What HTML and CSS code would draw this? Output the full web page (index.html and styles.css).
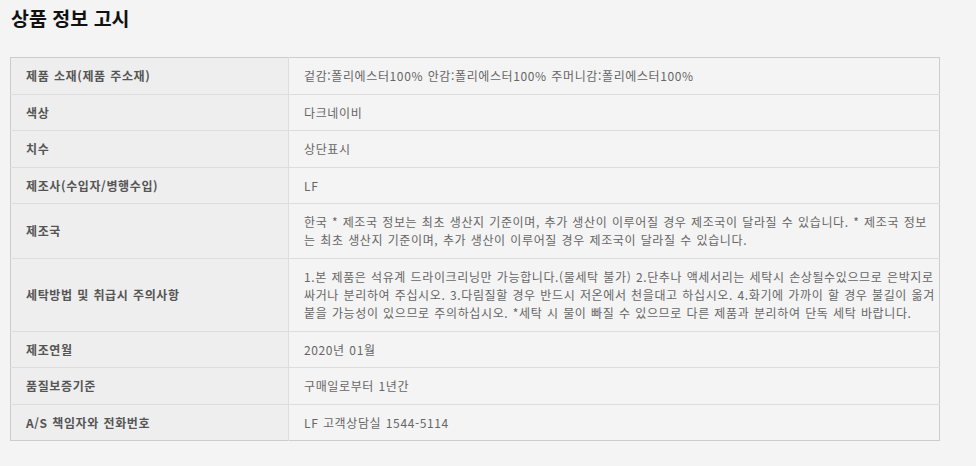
FILE: index.html
```html
<!DOCTYPE html>
<html lang="ko">
  <head>
    <meta charset="utf-8">
    <link rel="stylesheet" href="styles.css">
  </head>
  <body>
    <h2 class="titulo">상품 정보 고시</h2>
    <table class="info">
      <tbody>
        <tr>
          <th>제품 소재(제품 주소재)</th>
          <td>겉감:폴리에스터100% 안감:폴리에스터100% 주머니감:폴리에스터100%</td>
        </tr>
        <tr>
          <th>색상</th>
          <td>다크네이비</td>
        </tr>
        <tr>
          <th>치수</th>
          <td>상단표시</td>
        </tr>
        <tr>
          <th>제조사(수입자/병행수입)</th>
          <td>LF</td>
        </tr>
        <tr>
          <th>제조국</th>
          <td>한국 * 제조국 정보는 최초 생산지 기준이며, 추가 생산이 이루어질 경우 제조국이 달라질 수 있습니다. * 제조국 정보<br>는 최초 생산지 기준이며, 추가 생산이 이루어질 경우 제조국이 달라질 수 있습니다.</td>
        </tr>
        <tr>
          <th>세탁방법 및 취급시 주의사항</th>
          <td>1.본 제품은 석유계 드라이크리닝만 가능합니다.(물세탁 불가) 2.단추나 액세서리는 세탁시 손상될수있으므로 은박지로<br>싸거나 분리하여 주십시오. 3.다림질할 경우 반드시 저온에서 천을대고 하십시오. 4.화기에 가까이 할 경우 불길이 옮겨<br>붙을 가능성이 있으므로 주의하십시오. *세탁 시 물이 빠질 수 있으므로 다른 제품과 분리하여 단독 세탁 바랍니다.</td>
        </tr>
        <tr>
          <th>제조연월</th>
          <td>2020년 01월</td>
        </tr>
        <tr>
          <th>품질보증기준</th>
          <td>구매일로부터 1년간</td>
        </tr>
        <tr>
          <th>A/S 책임자와 전화번호</th>
          <td>LF 고객상담실 1544-5114</td>
        </tr>
      </tbody>
    </table>
  </body>
</html>
```

FILE: styles.css
```css
/* pagina de informacoes do produto */
body {
  margin: 0;
  padding: 0 10px;
  background-color: #f4f4f4;
  font-family: "Noto Sans CJK KR", "Liberation Sans", sans-serif;
  font-size: 12px;
}

.titulo {
  margin: 0;
  padding: 5px 0 0 1px;
  height: 57px;
  box-sizing: border-box;
  font-size: 19.5px;
  font-weight: bold;
  color: #111;
  line-height: 26px;
}

.info {
  width: 930px;
  border-collapse: collapse;
  border: 1px solid #cccccc;
  table-layout: fixed;
}

.info th, .info td {
  border-top: 1px solid #dddddd;
  padding: 9px 15px 8.6px;
  line-height: 18px;
  text-align: left;
  vertical-align: middle;
  letter-spacing: 0.62px;
  word-spacing: 0.6px;
}

.info tr:first-child th, .info tr:first-child td {
  border-top: none;
}

.info th {
  width: 247px;
  background-color: #eeeeee;
  color: #555555;
  font-weight: bold;
  border-right: 1px solid #dddddd;
}

.info td {
  color: #666666;
  padding-right: 0;
  word-break: break-all;
}
```
